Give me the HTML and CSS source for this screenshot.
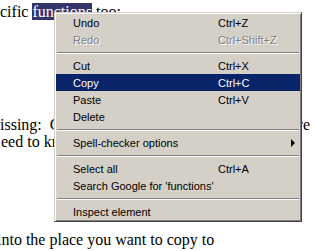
FILE: index.html
```html
<!DOCTYPE html>
<html lang="en">
  <head>
    <meta charset="UTF-8" />
    <title>Context menu</title>
    <link rel="stylesheet" href="styles.css">
  </head>
  <body>
    <div class="page">
      <p class="para first">cific <span class="selected">functions</span> too:</p>

      <p class="para middle">
        <span class="line split">
          <span class="left">issing:&nbsp; C</span>
          <span class="right">re</span>
        </span>
        <span class="line">eed to kn</span>
      </p>

      <p class="para last"><span class="shift">into the place you want to copy to</span></p>
    </div>

    <div class="menu">
      <div class="item"><span class="label">Undo</span><span class="key">Ctrl+Z</span></div>
      <div class="item disabled"><span class="label">Redo</span><span class="key">Ctrl+Shift+Z</span></div>
      <div class="sep"></div>
      <div class="item"><span class="label">Cut</span><span class="key">Ctrl+X</span></div>
      <div class="item active"><span class="label">Copy</span><span class="key">Ctrl+C</span></div>
      <div class="item"><span class="label">Paste</span><span class="key">Ctrl+V</span></div>
      <div class="item"><span class="label">Delete</span><span class="key"></span></div>
      <div class="sep"></div>
      <div class="item submenu"><span class="label">Spell-checker options</span><span class="key"></span><span class="arrow"></span></div>
      <div class="sep"></div>
      <div class="item"><span class="label">Select all</span><span class="key">Ctrl+A</span></div>
      <div class="item"><span class="label">Search Google for 'functions'</span><span class="key"></span></div>
      <div class="sep"></div>
      <div class="item"><span class="label">Inspect element</span><span class="key"></span></div>
    </div>
  </body>
</html>
```

FILE: styles.css
```css
html,
body {
  margin: 0;
  width: 316px;
  height: 251px;
  overflow: hidden;
  background: #fff;
}
.page {
  font-family: "Liberation Serif", "Times New Roman", serif;
  font-size: 16px;
  line-height: 17px;
  color: #000;
  padding-top: 3px;
}
.para {
  margin: 0;
  white-space: nowrap;
}
.middle {
  margin-top: 96px;
}
.last {
  margin-top: 81px;
}
.line {
  display: block;
  padding-left: 1px;
}
.split {
  display: flex;
  justify-content: space-between;
  padding-left: 0;
}
.split .right {
  padding-right: 6px;
}
.selected {
  background: #34346c;
  color: #fff;
}
.shift {
  display: inline-block;
  margin-left: -3px;
}

/* context menu */
.menu {
  position: absolute;
  left: 54px;
  top: 12px;
  width: 244px;
  padding: 1px;
  background: #d4d0c8;
  border: 1px solid;
  border-color: #d4d0c8 #404040 #404040 #d4d0c8;
  box-shadow: inset 1px 1px #fff, inset -1px -1px #808080;
  font-family: "Liberation Sans", Arial, sans-serif;
  font-size: 11px;
  color: #000;
}
.item {
  display: flex;
  align-items: center;
  height: 17px;
  padding-left: 17px;
  position: relative;
}
.label {
  width: 145px;
  white-space: nowrap;
}
.key {
  white-space: nowrap;
}
.item.active {
  background: #0a246a;
  color: #fff;
}
.item.disabled {
  color: #808080;
  text-shadow: 1px 1px 0 #fff;
}
.arrow {
  position: absolute;
  right: 5px;
  top: 5px;
  width: 0;
  height: 0;
  border-top: 4px solid transparent;
  border-bottom: 4px solid transparent;
  border-left: 4px solid #000;
}
.sep {
  height: 1px;
  margin: 4px 1px 3px;
  background: #808080;
  border-bottom: 1px solid #fff;
}
```
